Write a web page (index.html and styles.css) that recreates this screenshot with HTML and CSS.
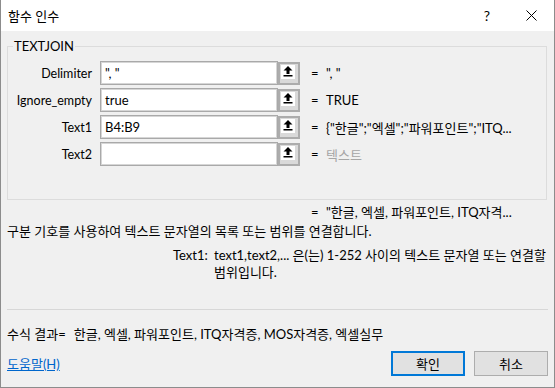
FILE: index.html
```html
<!DOCTYPE html>
<html lang="ko">
<head>
    <meta charset="UTF-8">
    <title>함수 인수</title>
    <link rel="stylesheet" href="styles.css">
</head>
<body>

<div class="dialog">
    <div class="titlebar">
        <span class="title">함수 인수</span>
        <span class="tb-btn help">?</span>
        <span class="tb-btn close">
            <svg width="11" height="11" viewBox="0 0 11 11"><path d="M0.5 0.5 L10.5 10.5 M10.5 0.5 L0.5 10.5" stroke="#000" stroke-width="1"/></svg>
        </span>
    </div>

    <div class="content">
        <!-- argumentos de la función -->
        <fieldset class="group">
            <legend>TEXTJOIN</legend>

            <div class="arg-row">
                <label>Delimiter</label>
                <div class="field">", "</div>
                <span class="ref-btn"><span class="ref-icon"><svg width="10" height="11" viewBox="0 0 10 11"><path d="M5 0 L0.5 4.5 H3.5 V8 H6.5 V4.5 H9.5 Z" fill="#000"/><rect x="0.5" y="9" width="9" height="1.5" fill="#000"/></svg></span></span>
                <span class="eq">=</span>
                <span class="val">", "</span>
            </div>

            <div class="arg-row">
                <label>Ignore_empty</label>
                <div class="field">true</div>
                <span class="ref-btn"><span class="ref-icon"><svg width="10" height="11" viewBox="0 0 10 11"><path d="M5 0 L0.5 4.5 H3.5 V8 H6.5 V4.5 H9.5 Z" fill="#000"/><rect x="0.5" y="9" width="9" height="1.5" fill="#000"/></svg></span></span>
                <span class="eq">=</span>
                <span class="val">TRUE</span>
            </div>

            <div class="arg-row">
                <label>Text1</label>
                <div class="field">B4:B9</div>
                <span class="ref-btn"><span class="ref-icon"><svg width="10" height="11" viewBox="0 0 10 11"><path d="M5 0 L0.5 4.5 H3.5 V8 H6.5 V4.5 H9.5 Z" fill="#000"/><rect x="0.5" y="9" width="9" height="1.5" fill="#000"/></svg></span></span>
                <span class="eq">=</span>
                <span class="val">{"한글";"엑셀";"파워포인트";"ITQ...</span>
            </div>

            <div class="arg-row">
                <label>Text2</label>
                <div class="field"></div>
                <span class="ref-btn"><span class="ref-icon"><svg width="10" height="11" viewBox="0 0 10 11"><path d="M5 0 L0.5 4.5 H3.5 V8 H6.5 V4.5 H9.5 Z" fill="#000"/><rect x="0.5" y="9" width="9" height="1.5" fill="#000"/></svg></span></span>
                <span class="eq">=</span>
                <span class="val muted">텍스트</span>
            </div>
        </fieldset>

        <div class="result-row">
            <span class="eq">=</span>
            <span class="val">"한글, 엑셀, 파워포인트, ITQ자격...</span>
        </div>

        <p class="desc">구분 기호를 사용하여 텍스트 문자열의 목록 또는 범위를 연결합니다.</p>

        <div class="arg-help">
            <span class="arg-name">Text1:</span>
            <span class="arg-text">text1,text2,... 은(는) 1-252 사이의 텍스트 문자열 또는 연결할 범위입니다.</span>
        </div>

        <div class="separator"></div>

        <div class="formula">수식 결과=<span class="formula-val">한글, 엑셀, 파워포인트, ITQ자격증, MOS자격증, 엑셀실무</span></div>

        <div class="footer">
            <a class="help-link" href="#">도움말(H)</a>
            <button class="btn primary">확인</button>
            <button class="btn">취소</button>
        </div>
    </div>
</div>

</body>
</html>
```

FILE: styles.css
```css
body {
    margin: 0;
    padding: 0;
    font-family: "Lato", "Noto Sans CJK KR", sans-serif;
    font-size: 13px;
    color: #000;
    background-color: #f0f0f0;
}
.dialog {
    width: 553px;
    height: 387px;
    border: 1px solid #8c8c8c;
    border-top: none;
    background-color: #f0f0f0;
    display: flex;
    flex-direction: column;
}
.titlebar {
    height: 31px;
    background-color: #fff;
    display: flex;
    align-items: center;
}
.title {
    flex: 1;
    padding-left: 7px;
}
.tb-btn {
    width: 44px;
    height: 31px;
    display: flex;
    align-items: center;
    justify-content: center;
}
.tb-btn.help {
    font-size: 14px;
}
.tb-btn.close {
    width: 45px;
}
.content {
    flex: 1;
    display: flex;
    flex-direction: column;
    padding: 0 6px 0 6px;
}
.group {
    margin: 8px 0 0 0;
    padding: 8px 0 30px 0;
    border: 1px solid #dcdcdc;
    width: 540px;
    box-sizing: border-box;
}
.group legend {
    margin-left: 5px;
    padding: 0 1px;
    line-height: 14px;
}
.arg-row {
    display: flex;
    align-items: center;
    height: 24px;
    margin-bottom: 3px;
}
.arg-row label {
    width: 84px;
    text-align: right;
    margin-right: 8px;
    font-size: 12.5px;
}
.field {
    width: 178px;
    height: 24px;
    box-sizing: border-box;
    border: 1px solid #a9a9a9;
    box-shadow: inset 0 0 0 1px #d6d6d6;
    background-color: #fff;
    padding: 0 4px;
    line-height: 22px;
}
.ref-btn {
    width: 22px;
    height: 23px;
    box-sizing: border-box;
    border: 2px solid #acacac;
    background-color: #d9d9d9;
    display: flex;
}
.ref-icon {
    width: 14px;
    height: 14px;
    margin: 1px 0 0 1px;
    background-color: #fff;
    display: flex;
    align-items: center;
    justify-content: center;
}
.eq {
    margin-left: 11px;
    width: 15px;
}
.val {
    white-space: nowrap;
}
.muted {
    color: #a6a6a6;
}
.result-row {
    display: flex;
    line-height: 16px;
    margin-top: 4px;
    padding-left: 293px;
}
.desc {
    margin: 3px 0 0 0;
    line-height: 16px;
}
.arg-help {
    display: flex;
    margin-top: 8px;
    line-height: 17px;
    padding-left: 166px;
}
.arg-name {
    width: 41px;
    flex-shrink: 0;
}
.arg-text {
    width: 332px;
    word-break: keep-all;
}
.separator {
    margin-top: 28px;
    height: 1px;
    background-color: #d7d7d7;
    width: 541px;
}
.formula {
    margin-top: 16px;
    line-height: 16px;
}
.formula-val {
    margin-left: 8px;
}
.footer {
    margin-top: 9px;
    display: flex;
    align-items: center;
}
.help-link {
    flex: 1;
    color: #0066cc;
    text-decoration: underline;
}
.btn {
    font-family: inherit;
    font-size: 13px;
    width: 74px;
    height: 25px;
    box-sizing: border-box;
    border: 1px solid #adadad;
    background-color: #e1e1e1;
    color: #000;
    margin-left: 9px;
    padding: 0;
}
.btn.primary {
    border: 2px solid #0078d7;
}
```
